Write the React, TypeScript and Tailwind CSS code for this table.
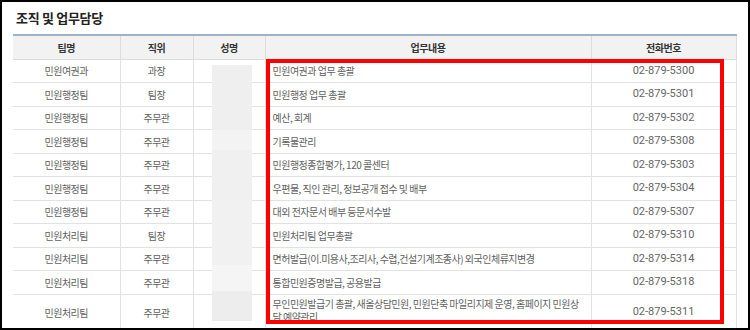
import React from "react";

const rows: [string, string, string, string][] = [
  ["민원여권과", "과장", "민원여권과 업무 총괄", "02-879-5300"],
  ["민원행정팀", "팀장", "민원행정 업무 총괄", "02-879-5301"],
  ["민원행정팀", "주무관", "예산, 회계", "02-879-5302"],
  ["민원행정팀", "주무관", "기록물관리", "02-879-5308"],
  ["민원행정팀", "주무관", "민원행정종합평가, 120 콜센터", "02-879-5303"],
  ["민원행정팀", "주무관", "우편물, 직인 관리, 정보공개 접수 및 배부", "02-879-5304"],
  ["민원행정팀", "주무관", "대외 전자문서 배부 등문서수발", "02-879-5307"],
  ["민원처리팀", "팀장", "민원처리팀 업무총괄", "02-879-5310"],
  ["민원처리팀", "주무관", "면허발급(이.미용사,조리사, 수렵,건설기계조종사) 외국인체류지변경", "02-879-5314"],
  ["민원처리팀", "주무관", "통합민원증명발급, 공용발급", "02-879-5318"],
  [
    "민원처리팀",
    "주무관",
    "무인민원발급기 총괄, 새올상담민원, 민원단축 마일리지제 운영, 홈페이지 민원상담 예약관리",
    "02-879-5311",
  ],
];

const ko = { fontFamily: '"Noto Sans CJK KR", "Liberation Sans", sans-serif' };
const num = { fontFamily: 'Roboto, "Liberation Sans", sans-serif' };

export default function App() {
  return (
    <div className="w-[750px] h-[330px] border-2 border-black bg-white overflow-hidden" style={ko}>
      <div className="h-[32px] pl-[14px] pt-[6px] text-[13px] font-bold text-[#222] tracking-[-0.3px] leading-[20px]">
        조직 및 업무담당
      </div>
      <div className="relative ml-[11px] w-[723px]">
        <table className="w-[723px] table-fixed border-collapse text-[10px] tracking-[-0.5px] text-[#5f5f5f]">
          <colgroup>
            <col className="w-[107px]" />
            <col className="w-[73px]" />
            <col className="w-[72px]" />
            <col className="w-[326px]" />
            <col className="w-[145px]" />
          </colgroup>
          <thead>
            <tr className="h-[24px] bg-[#f2f2f2] border-t-2 border-t-[#9db3cb] text-[#333] font-bold">
              <th className="text-center font-bold border-b border-[#dcdcdc]">팀명</th>
              <th className="text-center font-bold border-l border-b border-[#dcdcdc]">직위</th>
              <th className="text-center font-bold border-l border-b border-[#dcdcdc]">성명</th>
              <th className="text-center font-bold border-l border-b border-[#dcdcdc]">업무내용</th>
              <th className="text-center font-bold border-l border-r border-b border-[#dcdcdc]">전화번호</th>
            </tr>
          </thead>
          <tbody>
            {rows.map((r, i) => {
              const last = i === rows.length - 1;
              return (
                <tr key={i} className={last ? "h-[36px]" : "h-[23.5px]"}>
                  <td className="text-center border-b border-[#e2e2e2] align-middle">{r[0]}</td>
                  <td className="text-center border-l border-b border-[#e2e2e2] align-middle">{r[1]}</td>
                  <td className="border-l border-b border-[#e2e2e2]"></td>
                  <td
                    className={
                      last
                        ? "border-l border-b border-[#e2e2e2] pl-[7px] pr-[8px] pb-[4px] leading-[13px] text-left align-middle break-all"
                        : "border-l border-b border-[#e2e2e2] pl-[7px] pr-[8px] leading-[13px] text-left align-middle break-all"
                    }
                  >
                    {r[2]}
                  </td>
                  <td
                    className="text-center border-l border-r border-b border-[#e2e2e2] text-[11px] tracking-normal text-[#666] align-middle"
                    style={num}
                  >
                    {r[3]}
                  </td>
                </tr>
              );
            })}
          </tbody>
        </table>
        <div className="absolute left-[199px] top-[31px] w-[40px] h-[256px] flex flex-col">
          <div className="h-[65px] bg-[#efefef]" />
          <div className="h-[20px] bg-[#f3f3f3]" />
          <div className="h-[50px] bg-[#f0f0f0]" />
          <div className="h-[65px] bg-[#f1f1f1]" />
          <div className="h-[26px] bg-[#f5f5f5]" />
          <div className="h-[30px] bg-[#ededed]" />
        </div>
        <div className="absolute left-[253px] top-[25px] w-[458px] h-[265px] border-4 border-[#ff0000]" />
      </div>
    </div>
  );
}
